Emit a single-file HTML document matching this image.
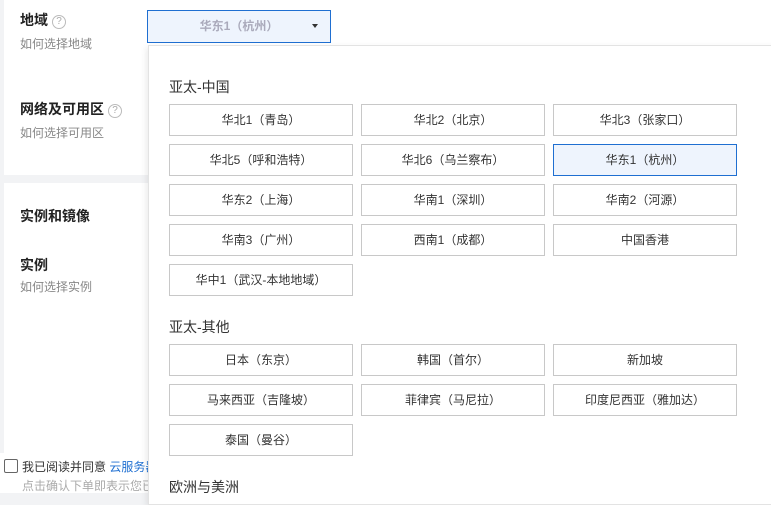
<!DOCTYPE html>
<html><head><meta charset="utf-8"><style>
*{margin:0;padding:0;box-sizing:border-box}
body{width:771px;height:493px;overflow:hidden;background:#f2f3f5;font-family:"Liberation Sans","Noto Sans CJK SC",sans-serif;position:relative;color:#333}
.card{position:absolute;left:4px;background:#fff;width:767px}
.abs{position:absolute;white-space:nowrap}
.t{font-size:14px;font-weight:bold;color:#222}
.s{font-size:12px;color:#888}
.q{display:inline-block;width:14px;height:14px;border:1px solid #bbb;border-radius:50%;font-size:10px;color:#aaa;text-align:center;line-height:12px;font-weight:normal;vertical-align:1px;margin-left:4px}
.sel{position:absolute;left:147px;top:10px;width:184px;height:33px;background:#eef4fd;border:1px solid #1f6fd1;font-size:12px;color:#aab;font-weight:bold;text-align:center;line-height:30px}
.sel i{position:absolute;right:12px;top:13px;border:3px solid transparent;border-top:4px solid #333}
.panel{position:absolute;left:148px;top:45px;width:640px;height:460px;background:#fff;border:1px solid #e3e3e3;box-shadow:-2px 2px 6px rgba(0,0,0,.08)}
.h{position:absolute;left:20px;font-size:14px;color:#333}
.b{position:absolute;width:184px;height:32px;border:1px solid #c8c8c8;font-size:12px;color:#333;text-align:center;line-height:30px;background:#fff}
.b.on{border-color:#1f6fd1;background:#eef4fd}
</style></head><body>
<div class="card" style="top:0;height:175px"></div>
<div class="card" style="top:183px;height:270px"></div>
<div class="abs" style="left:0;top:453px;width:771px;height:40px;background:#fff"></div>
<div class="abs t" style="left:20px;top:10px">地域<span class="q">?</span></div>
<div class="abs s" style="left:20px;top:35px">如何选择地域</div>
<div class="abs t" style="left:20px;top:99px">网络及可用区<span class="q">?</span></div>
<div class="abs s" style="left:20px;top:124px">如何选择可用区</div>
<div class="abs t" style="left:20px;top:206px">实例和镜像</div>
<div class="abs t" style="left:20px;top:255px">实例</div>
<div class="abs s" style="left:20px;top:278px">如何选择实例</div>
<div class="abs" style="left:4px;top:459px;width:14px;height:14px;border:1px solid #666;border-radius:2px;background:#fff"></div>
<div class="abs" style="left:22px;top:458px;font-size:12px;color:#333">我已阅读并同意 <span style="color:#1f6fd1">云服务器</span></div>
<div class="abs s" style="left:22px;top:477px;color:#aaa">点击确认下单即表示您已</div>
<div class="sel">华东1（杭州）<i></i></div>
<div class="panel">
<div class="h" style="top:31px">亚太-中国</div>
<div class="b" style="left:20px;top:58px">华北1（青岛）</div>
<div class="b" style="left:212px;top:58px">华北2（北京）</div>
<div class="b" style="left:404px;top:58px">华北3（张家口）</div>
<div class="b" style="left:20px;top:98px">华北5（呼和浩特）</div>
<div class="b" style="left:212px;top:98px">华北6（乌兰察布）</div>
<div class="b on" style="left:404px;top:98px">华东1（杭州）</div>
<div class="b" style="left:20px;top:138px">华东2（上海）</div>
<div class="b" style="left:212px;top:138px">华南1（深圳）</div>
<div class="b" style="left:404px;top:138px">华南2（河源）</div>
<div class="b" style="left:20px;top:178px">华南3（广州）</div>
<div class="b" style="left:212px;top:178px">西南1（成都）</div>
<div class="b" style="left:404px;top:178px">中国香港</div>
<div class="b" style="left:20px;top:218px">华中1（武汉-本地地域）</div>
<div class="h" style="top:271px">亚太-其他</div>
<div class="b" style="left:20px;top:298px">日本（东京）</div>
<div class="b" style="left:212px;top:298px">韩国（首尔）</div>
<div class="b" style="left:404px;top:298px">新加坡</div>
<div class="b" style="left:20px;top:338px">马来西亚（吉隆坡）</div>
<div class="b" style="left:212px;top:338px">菲律宾（马尼拉）</div>
<div class="b" style="left:404px;top:338px">印度尼西亚（雅加达）</div>
<div class="b" style="left:20px;top:378px">泰国（曼谷）</div>
<div class="h" style="top:431px">欧洲与美洲</div>
</div>
</body></html>
